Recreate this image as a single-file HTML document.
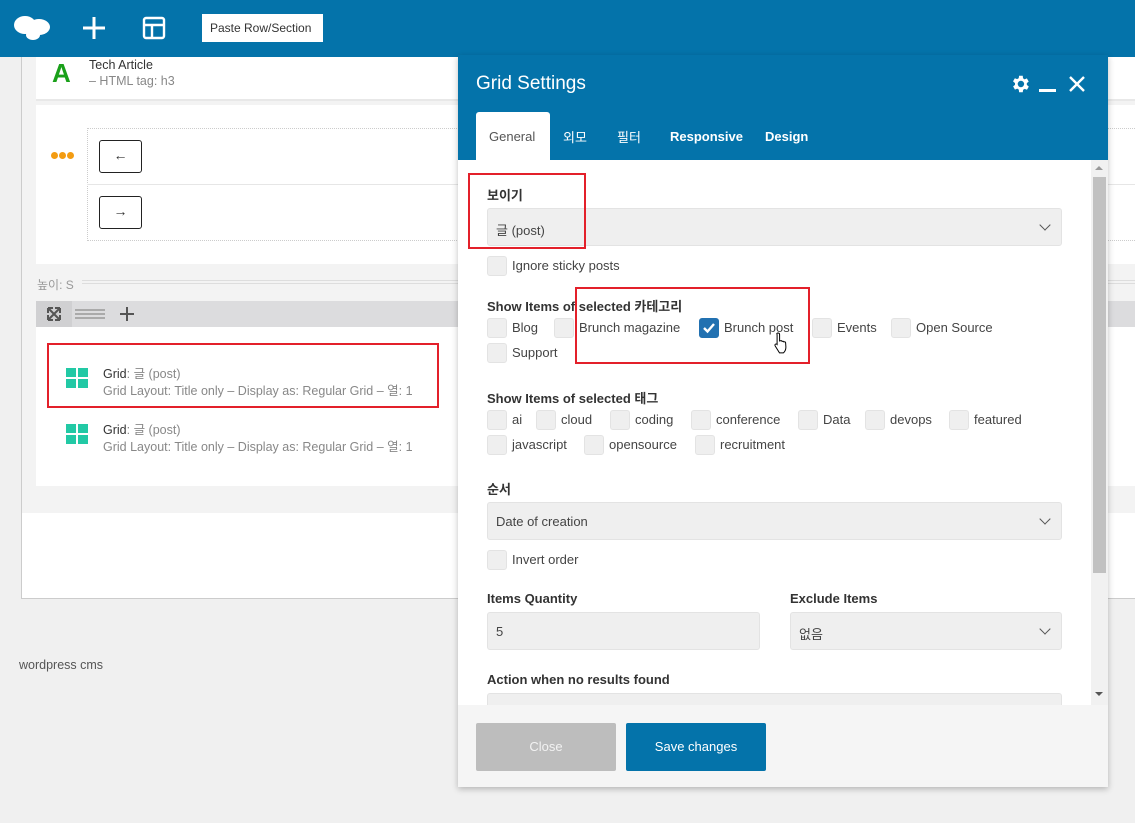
<!DOCTYPE html>
<html><head><meta charset="utf-8"><style>
*{box-sizing:border-box;margin:0;padding:0}
body{width:1135px;height:823px;overflow:hidden;background:#f0f0f0;font-family:"Liberation Sans","Noto Sans CJK KR",sans-serif;font-size:13px;color:#444;position:relative}
.a{position:absolute}
.cb{position:absolute;width:20px;height:20px;background:#efefef;border:1px solid #e3e3e3;border-radius:3px}
.lb{position:absolute;font-size:13px;color:#444;white-space:nowrap}
.h{position:absolute;font-size:13px;font-weight:bold;color:#333;white-space:nowrap}
.sel{position:absolute;background:#efefef;border:1px solid #e3e3e3;border-radius:3px;height:38px;font-size:13px;color:#444;padding:11px 8px}
.chev{position:absolute;right:12px;top:12px;width:8px;height:8px;border-right:1.6px solid #555;border-bottom:1.6px solid #555;transform:rotate(45deg)}
.red{position:absolute;border:2px solid #e3202a}
</style></head><body>
<!-- top bar -->
<div class="a" style="left:0;top:0;width:1135px;height:57px;background:#0473aa"></div>
<svg class="a" style="left:13px;top:12px" width="38" height="30" viewBox="0 0 38 30"><ellipse cx="12" cy="13" rx="11" ry="9" fill="#fff"/><ellipse cx="26" cy="15" rx="11" ry="8" fill="#fff"/><ellipse cx="20" cy="23" rx="7" ry="5" fill="#fff"/></svg>
<svg class="a" style="left:82px;top:16px" width="24" height="24"><path d="M12 1v22M1 12h22" stroke="#fff" stroke-width="3"/></svg>
<svg class="a" style="left:142px;top:16px" width="24" height="24"><rect x="2" y="2" width="20" height="20" rx="2" fill="none" stroke="#fff" stroke-width="2.4"/><path d="M2 9h20M10 9v13" stroke="#fff" stroke-width="2.4"/></svg>
<div class="a" style="left:202px;top:14px;width:121px;height:28px;background:#fff;font-size:12px;color:#333;padding:7px 0 0 8px;white-space:nowrap">Paste Row/Section</div>
<!-- main panel -->
<div class="a" style="left:21px;top:57px;width:1120px;height:542px;background:#fff;border:1px solid #ccc;border-top:none"></div>
<div class="a" style="left:22px;top:57px;width:1113px;height:456px;background:#f3f3f3"></div>
<div class="a" style="left:36px;top:57px;width:1099px;height:44px;background:#fff;border-bottom:2px solid #e8e8e8"></div>
<div class="a" style="left:52px;top:58px;font-size:26px;font-weight:bold;color:#1aa01a">A</div>
<div class="a" style="left:89px;top:58px;font-size:12.5px;color:#333">Tech Article</div>
<div class="a" style="left:89px;top:74px;font-size:12.5px;color:#888">– HTML tag: h3</div>
<div class="a" style="left:36px;top:105px;width:1099px;height:159px;background:#fff"></div>
<div class="a" style="left:51px;top:152px;width:22px;height:8px">
<span class="a" style="left:0;top:0;width:7px;height:7px;border-radius:50%;background:#f39c12"></span><span class="a" style="left:8px;top:0;width:7px;height:7px;border-radius:50%;background:#f39c12"></span><span class="a" style="left:16px;top:0;width:7px;height:7px;border-radius:50%;background:#f39c12"></span></div>
<div class="a" style="left:87px;top:128px;width:1060px;height:113px;border:1px dotted #ccc"></div>
<div class="a" style="left:87px;top:184px;width:1060px;height:1px;background:#e6e6e6"></div>
<div class="a" style="left:99px;top:140px;width:43px;height:33px;border:1.5px solid #222;border-radius:3px;text-align:center;line-height:29px;font-size:14px;color:#333">←</div>
<div class="a" style="left:99px;top:196px;width:43px;height:33px;border:1.5px solid #222;border-radius:3px;text-align:center;line-height:29px;font-size:14px;color:#333">→</div>
<div class="a" style="left:37px;top:276px;font-size:12px;color:#999">높이: S</div>
<div class="a" style="left:82px;top:280px;width:1060px;height:4px;border-top:1px solid #ddd;border-bottom:1px solid #ddd"></div>
<div class="a" style="left:36px;top:301px;width:1099px;height:26px;background:#dcdcde"></div>
<div class="a" style="left:36px;top:301px;width:36px;height:26px;background:#d0d0d2"></div>
<svg class="a" style="left:46px;top:306px" width="16" height="16"><path d="M2 2l12 12M14 2L2 14M2 2h5M2 2v5M14 2h-5M14 2v5M2 14h5M2 14v-5M14 14h-5M14 14v-5" stroke="#555" stroke-width="2"/></svg>
<div class="a" style="left:75px;top:309px;width:30px;height:10px;border-top:2px solid #aaa;border-bottom:2px solid #aaa"></div>
<div class="a" style="left:75px;top:313px;width:30px;height:2px;background:#aaa"></div>
<svg class="a" style="left:119px;top:306px" width="16" height="16"><path d="M8 1v14M1 8h14" stroke="#555" stroke-width="2"/></svg>
<div class="a" style="left:36px;top:327px;width:1099px;height:159px;background:#fff"></div>
<svg class="a" style="left:66px;top:368px" width="22" height="20"><rect x="0" y="0" width="10" height="9" fill="#22c9a5"/><rect x="12" y="0" width="10" height="9" fill="#22c9a5"/><rect x="0" y="11" width="10" height="9" fill="#22c9a5"/><rect x="12" y="11" width="10" height="9" fill="#22c9a5"/></svg>
<div class="a" style="left:103px;top:363px;font-size:12.5px;color:#888"><span style="color:#333">Grid</span>: 글 (post)</div>
<div class="a" style="left:103px;top:380px;font-size:12.5px;color:#888">Grid Layout: Title only – Display as: Regular Grid – 열: 1</div>
<svg class="a" style="left:66px;top:424px" width="22" height="20"><rect x="0" y="0" width="10" height="9" fill="#22c9a5"/><rect x="12" y="0" width="10" height="9" fill="#22c9a5"/><rect x="0" y="11" width="10" height="9" fill="#22c9a5"/><rect x="12" y="11" width="10" height="9" fill="#22c9a5"/></svg>
<div class="a" style="left:103px;top:419px;font-size:12.5px;color:#888"><span style="color:#333">Grid</span>: 글 (post)</div>
<div class="a" style="left:103px;top:436px;font-size:12.5px;color:#888">Grid Layout: Title only – Display as: Regular Grid – 열: 1</div>
<div class="red" style="left:47px;top:343px;width:392px;height:65px"></div>
<div class="a" style="left:19px;top:658px;font-size:12.5px;color:#555">wordpress cms</div>

<!-- modal -->
<div class="a" style="left:458px;top:55px;width:650px;height:732px;background:#fff;box-shadow:0 2px 6px rgba(0,0,0,.25)"></div>
<div class="a" style="left:458px;top:55px;width:650px;height:105px;background:#0473aa"></div>
<div class="a" style="left:476px;top:73px;font-size:19px;color:#fff">Grid Settings</div>
<svg class="a" style="left:1009px;top:73px" width="22" height="22" viewBox="0 0 24 24"><path fill="#fff" d="M19.4 13a7.5 7.5 0 000-2l2.1-1.6-2-3.5-2.5 1a7 7 0 00-1.7-1L15 3h-4l-.4 2.7a7 7 0 00-1.7 1l-2.5-1-2 3.5L6.6 11a7.5 7.5 0 000 2l-2.1 1.6 2 3.5 2.5-1a7 7 0 001.7 1L11 21h4l.4-2.7a7 7 0 001.7-1l2.5 1 2-3.5zM13 15.5a3.5 3.5 0 110-7 3.5 3.5 0 010 7z"/></svg>
<div class="a" style="left:1039px;top:89px;width:17px;height:3px;background:#fff"></div>
<svg class="a" style="left:1068px;top:75px" width="18" height="18"><path d="M2 2l14 14M16 2L2 16" stroke="#fff" stroke-width="2.4"/></svg>
<div class="a" style="left:476px;top:112px;width:74px;height:48px;background:#fff;border-radius:3px 3px 0 0"></div>
<div class="a" style="left:489px;top:129px;font-size:13px;color:#555">General</div>
<div class="a" style="left:563px;top:127px;font-size:13px;color:#fff">외모</div>
<div class="a" style="left:617px;top:127px;font-size:13px;color:#fff">필터</div>
<div class="a" style="left:670px;top:129px;font-size:13px;color:#fff;font-weight:bold">Responsive</div>
<div class="a" style="left:765px;top:129px;font-size:13px;color:#fff;font-weight:bold">Design</div>
<!-- scrollbar -->
<div class="a" style="left:1091px;top:160px;width:17px;height:545px;background:#f1f1f1"></div>
<div class="a" style="left:1093px;top:177px;width:13px;height:396px;background:#c1c1c1"></div>
<div class="a" style="left:1095px;top:166px;width:0;height:0;border-left:4px solid transparent;border-right:4px solid transparent;border-bottom:4px solid #999"></div>
<div class="a" style="left:1095px;top:692px;width:0;height:0;border-left:4px solid transparent;border-right:4px solid transparent;border-top:4px solid #555"></div>

<div class="h" style="left:487px;top:185px">보이기</div>
<div class="sel" style="left:487px;top:208px;width:575px">글 (post)<span class="chev"></span></div>
<div class="red" style="left:468px;top:173px;width:118px;height:76px"></div>
<div class="cb" style="left:487px;top:256px"></div><div class="lb" style="left:512px;top:258px">Ignore sticky posts</div>

<div class="h" style="left:487px;top:296px">Show Items of selected 카테고리</div>
<div class="cb" style="left:487px;top:318px"></div><div class="lb" style="left:512px;top:320px">Blog</div>
<div class="cb" style="left:554px;top:318px"></div><div class="lb" style="left:579px;top:320px">Brunch magazine</div>
<div class="cb" style="left:699px;top:318px;background:#2271b1;border-color:#2271b1"></div>
<svg class="a" style="left:702px;top:322px" width="14" height="12"><path d="M2 6l3.5 3.5L12 2" stroke="#fff" stroke-width="2.4" fill="none"/></svg>
<div class="lb" style="left:724px;top:320px">Brunch post</div>
<div class="cb" style="left:812px;top:318px"></div><div class="lb" style="left:837px;top:320px">Events</div>
<div class="cb" style="left:891px;top:318px"></div><div class="lb" style="left:916px;top:320px">Open Source</div>
<div class="cb" style="left:487px;top:343px"></div><div class="lb" style="left:512px;top:345px">Support</div>
<svg class="a" style="left:773px;top:331px" width="18" height="24" viewBox="0 0 18 24"><path d="M5 2c1 0 1.6.6 1.6 1.6V10l1-.3c.6-.1 1.3.1 1.5.7.6-.4 1.5-.2 1.8.5.6-.3 1.5 0 1.7.7l.3 4.5c0 2.5-1 4.5-2.5 5.8H6.5L2.2 15c-.5-.7-.3-1.6.4-1.9.6-.3 1.2 0 1.5.3V3.6C3.4 2.6 4 2 5 2z" fill="#fff" stroke="#000" stroke-width="1"/></svg>
<div class="red" style="left:575px;top:287px;width:235px;height:77px"></div>

<div class="h" style="left:487px;top:388px">Show Items of selected 태그</div>
<div class="cb" style="left:487px;top:410px"></div><div class="lb" style="left:512px;top:412px">ai</div>
<div class="cb" style="left:536px;top:410px"></div><div class="lb" style="left:561px;top:412px">cloud</div>
<div class="cb" style="left:610px;top:410px"></div><div class="lb" style="left:635px;top:412px">coding</div>
<div class="cb" style="left:691px;top:410px"></div><div class="lb" style="left:716px;top:412px">conference</div>
<div class="cb" style="left:798px;top:410px"></div><div class="lb" style="left:823px;top:412px">Data</div>
<div class="cb" style="left:865px;top:410px"></div><div class="lb" style="left:890px;top:412px">devops</div>
<div class="cb" style="left:949px;top:410px"></div><div class="lb" style="left:974px;top:412px">featured</div>
<div class="cb" style="left:487px;top:435px"></div><div class="lb" style="left:512px;top:437px">javascript</div>
<div class="cb" style="left:584px;top:435px"></div><div class="lb" style="left:609px;top:437px">opensource</div>
<div class="cb" style="left:695px;top:435px"></div><div class="lb" style="left:720px;top:437px">recruitment</div>

<div class="h" style="left:487px;top:479px">순서</div>
<div class="sel" style="left:487px;top:502px;width:575px">Date of creation<span class="chev"></span></div>
<div class="cb" style="left:487px;top:550px"></div><div class="lb" style="left:512px;top:552px">Invert order</div>

<div class="h" style="left:487px;top:591px">Items Quantity</div>
<div class="sel" style="left:487px;top:612px;width:273px">5</div>
<div class="h" style="left:790px;top:591px">Exclude Items</div>
<div class="sel" style="left:790px;top:612px;width:272px">없음<span class="chev"></span></div>
<div class="h" style="left:487px;top:672px">Action when no results found</div>
<div class="a" style="left:487px;top:693px;width:575px;height:12px;background:#efefef;border:1px solid #e3e3e3;border-bottom:none;border-radius:3px 3px 0 0"></div>

<div class="a" style="left:458px;top:705px;width:650px;height:82px;background:#f5f5f5"></div>
<div class="a" style="left:476px;top:723px;width:140px;height:48px;background:#bdbdbd;border-radius:2px;color:#f2f2f2;text-align:center;line-height:48px;font-size:13px">Close</div>
<div class="a" style="left:626px;top:723px;width:140px;height:48px;background:#0473aa;border-radius:2px;color:#fff;text-align:center;line-height:48px;font-size:13px">Save changes</div>
</body></html>
